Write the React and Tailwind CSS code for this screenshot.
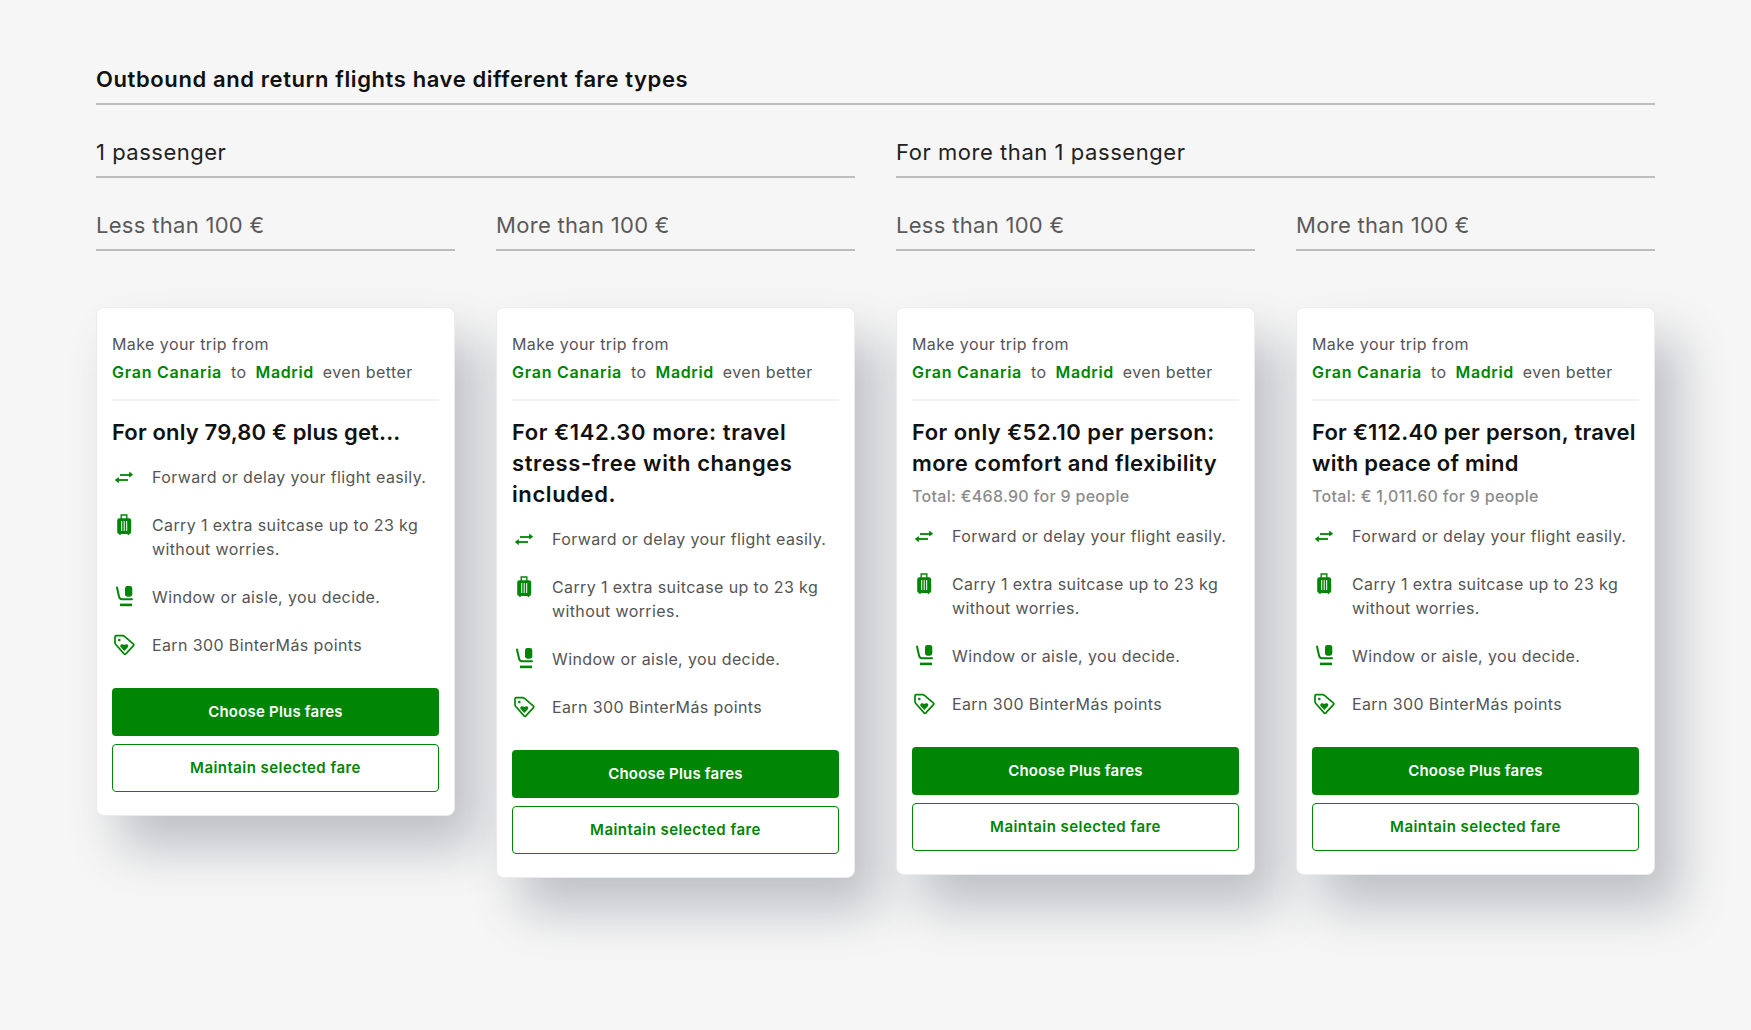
const G = "#008504";

const ArrowsIcon = () => (
  <svg width="24" height="24" viewBox="0 0 24 24" fill="none">
    <path d="M8 10h10" stroke={G} strokeWidth="1.800" />
    <path d="M17.200 6.400 21.200 9.800l-4 2.800z" fill={G} />
    <path d="M16 15H6" stroke={G} strokeWidth="1.800" />
    <path d="M6.800 12 2.800 15l4 3.200z" fill={G} />
  </svg>
);

const SuitcaseIcon = () => (
  <svg width="24" height="24" viewBox="0 0 24 24" fill="none">
    <path d="M9.200 6V2h5.600V6" stroke={G} strokeWidth="1.400" />
    <rect x="5.200" y="5.200" width="14" height="15.800" rx="2.200" fill={G} />
    <path d="M8 20.500v1.500M16.400 20.500v1.500" stroke={G} strokeWidth="1.400" />
    <path d="M9.700 8v10M12.200 8v10M14.700 8v10" stroke="#fff" strokeWidth="1" />
  </svg>
);

const SeatIcon = () => (
  <svg width="24" height="24" viewBox="0 0 24 24" fill="none">
    <path d="M5 2.500 7 11.500c.4 1.800 1.300 2.700 3 2.700h10" stroke={G} strokeWidth="2" strokeLinecap="round" />
    <rect x="8" y="18.600" width="12" height="2.600" fill={G} />
    <rect x="13" y="1" width="7.300" height="10.700" rx="2.400" fill={G} />
  </svg>
);

const TagIcon = () => (
  <svg width="24" height="24" viewBox="0 0 24 24" fill="none">
    <path d="M3 4c0-.8.5-1.300 1.300-1.300h6.600c.5 0 .9.200 1.300.5l9.300 8c.4.400.4 1.100 0 1.500l-7.700 8.200c-.5.500-1.200.500-1.700 0L3.800 11.500c-.5-.5-.8-1-.8-1.700z" stroke={G} strokeWidth="1.700" strokeLinejoin="round" />
    <circle cx="7.300" cy="7" r="1.300" fill={G} />
    <path d="M12.300 18 8.800 14.300c-1.700-2 1-4.200 3.500-2.300 2.500-1.900 5.200.3 3.500 2.300z" fill={G} />
  </svg>
);

const items = [
  [ArrowsIcon, "Forward or delay your flight easily."],
  [SuitcaseIcon, "Carry 1 extra suitcase up to 23 kg without worries."],
  [SeatIcon, "Window or aisle, you decide."],
  [TagIcon, "Earn 300 BinterMás points"],
];

const cards = [
  { title: "For only 79,80 € plus get...", track: "tracking-[0.15px]" },
  { title: "For €142.30 more: travel stress-free with changes included.", track: "tracking-[0.6px]" },
  { title: "For only €52.10 per person: more comfort and flexibility", total: "Total: €468.90 for 9 people", track: "tracking-[0.45px]" },
  { title: "For €112.40 per person, travel with peace of mind", total: "Total: € 1,011.60 for 9 people", track: "tracking-[0.25px]" },
];

function Card({ title, total, track }) {
  return (
    <div className="bg-white rounded-lg border border-[#ececec] px-[15px] pt-[22px] pb-[23px] shadow-[24px_32px_50px_rgba(70,80,95,0.32)]">
      <div className="text-[16px] leading-[28px] text-[#555555] tracking-[0.42px] pb-[13px] border-b-2 border-[#f3f3f3]">
        <div>Make your trip from</div>
        <div className="flex gap-[9px]">
          <span className="font-semibold text-[#008504] tracking-[0.75px]">Gran Canaria</span>
          <span>to</span>
          <span className="font-semibold text-[#008504] tracking-[0.6px]">Madrid</span>
          <span>even better</span>
        </div>
      </div>
      <h3 className={`mt-[16px] text-[22px] leading-[31px] font-semibold text-[#111111] ${track}`}>{title}</h3>
      {total && <p className="text-[16px] leading-[28px] font-medium text-[#8c8c8c] mt-[3px] tracking-[0.3px]">{total}</p>}
      <ul className={`flex flex-col gap-[24px] ${total ? "mt-[14px]" : "mt-[17px]"}`}>
        {items.map(([Icon, text]) => (
          <li key={text} className="flex gap-4 text-[16px] leading-[24px] text-[#555555] tracking-[0.38px]">
            <span className="shrink-0 w-6 h-6"><Icon /></span>
            <span>{text}</span>
          </li>
        ))}
      </ul>
      <button className="mt-[31px] w-full h-[48px] rounded bg-[#008504] text-white text-[15px] font-semibold tracking-[0.2px]">Choose Plus fares</button>
      <button className="mt-2 w-full h-[48px] rounded bg-white border border-[#008504] text-[#008504] text-[15px] font-semibold tracking-[0.45px]">Maintain selected fare</button>
    </div>
  );
}

const Label = ({ className, children }) => (
  <div className={`h-[48px] flex items-center border-b-2 border-[#bdbdbd] pb-[2px] ${className}`}>{children}</div>
);

export default function App() {
  return (
    <div className="min-h-[1030px] bg-[#f6f6f6] pl-[96px] pr-[96px] pt-[57px] pb-[60px] font-['Inter','Liberation_Sans',sans-serif]">
      <Label className="text-[22px] font-semibold text-[#111111] tracking-[0.6px]">Outbound and return flights have different fare types</Label>
      <div className="grid grid-cols-2 gap-x-[41px] mt-[25px]">
        <Label className="text-[22px] text-[#222222] tracking-[0.5px]">1 passenger</Label>
        <Label className="text-[22px] text-[#222222] tracking-[0.55px]">For more than 1 passenger</Label>
      </div>
      <div className="grid grid-cols-4 gap-x-[41px] mt-[25px]">
        {["Less than 100 €", "More than 100 €", "Less than 100 €", "More than 100 €"].map((t, i) => (
          <Label key={i} className="text-[22px] text-[#5a5a5a] tracking-[0.3px]">{t}</Label>
        ))}
      </div>
      <div className="grid grid-cols-4 gap-x-[41px] mt-[56px] items-start">
        {cards.map((c) => <Card key={c.title} {...c} />)}
      </div>
    </div>
  );
}
